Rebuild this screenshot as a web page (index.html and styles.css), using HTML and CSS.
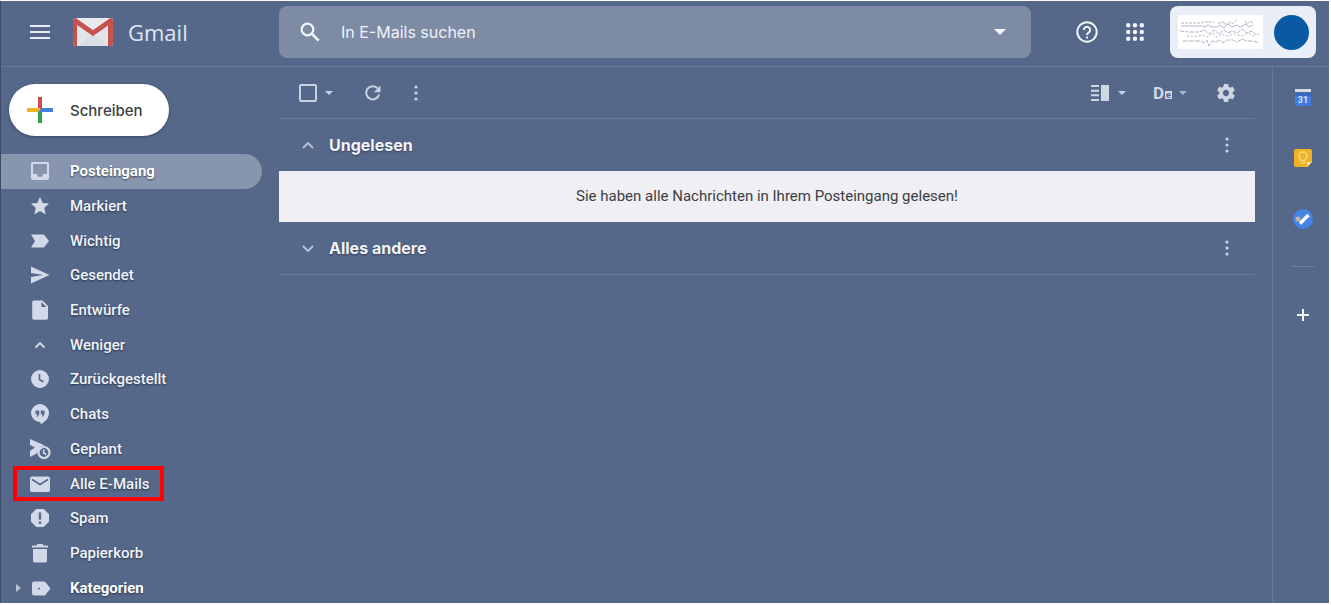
FILE: index.html
```
<!DOCTYPE html>
<html lang="de">
<head>
<meta charset="utf-8">
<title>Gmail</title>
<link rel="stylesheet" href="styles.css">
</head>
<body>
<div class="app">
  <header class="topbar">
    <div class="brand">
      <button class="icon-btn menu" type="button" aria-label="Hauptmenü">
        <svg width="20" height="14" viewBox="0 0 20 14"><path d="M0 1h20M0 7h20M0 13h20" stroke="#e8ecf5" stroke-width="2"/></svg>
      </button>
      <svg class="logo" width="40" height="30" viewBox="0 0 40 30">
        <path d="M3 1h34a3 3 0 0 1 3 3v22a3 3 0 0 1-3 3H3a3 3 0 0 1-3-3V4a3 3 0 0 1 3-3z" fill="#e3e4e8"/>
        <path d="M5 29l15-12 15 12z" fill="#d9dde4"/>
        <path d="M0 4a3 3 0 0 1 3-3l17 12L37 1a3 3 0 0 1 3 3v22a3 3 0 0 1-3 3h-2V8.500L20 19 4 8v21H3a3 3 0 0 1-3-3z" fill="#c5524d"/>
        <path d="M3 1h34L20 13z" fill="#e9eaee"/>
      </svg>
      <span class="brand-name">Gmail</span>
    </div>
    <form class="search" role="search">
      <button class="icon-btn" type="button" aria-label="Suchen">
        <svg width="20" height="20" viewBox="0 0 20 20" fill="none" stroke="#f1f4fa"><circle cx="7.500" cy="7.500" r="5.800" stroke-width="2.200"/><path d="M11.700 11.700l7 7" stroke-width="2.600"/></svg>
      </button>
      <input class="search-input" type="text" placeholder="In E-Mails suchen" aria-label="In E-Mails suchen">
      <button class="icon-btn" type="button" aria-label="Suchoptionen">
        <svg width="12" height="6" viewBox="0 0 12 6"><path d="M0 0h12L6 6z" fill="#f1f4fa"/></svg>
      </button>
    </form>
    <div class="account-tools">
      <button class="icon-btn" type="button" aria-label="Support">
        <svg width="22" height="22" viewBox="0 0 22 22" fill="none" stroke="#f1f4fa" stroke-width="2"><circle cx="11" cy="11" r="9.700"/><path d="M7.900 9a3.100 3.100 0 1 1 5 2.300C11.700 12.200 11 12.700 11 14"/><path d="M11 15.500v2"/></svg>
      </button>
      <button class="icon-btn" type="button" aria-label="Google Apps">
        <svg width="18" height="18" viewBox="0 0 18 18" fill="#f1f4fa"><circle cx="2.200" cy="2.200" r="2.200"/><circle cx="9" cy="2.200" r="2.200"/><circle cx="15.800" cy="2.200" r="2.200"/><circle cx="2.200" cy="9" r="2.200"/><circle cx="9" cy="9" r="2.200"/><circle cx="15.800" cy="9" r="2.200"/><circle cx="2.200" cy="15.800" r="2.200"/><circle cx="9" cy="15.800" r="2.200"/><circle cx="15.800" cy="15.800" r="2.200"/></svg>
      </button>
      <button class="account" type="button" aria-label="Konto">
        <svg class="scribble" width="85" height="34" viewBox="0 0 85 34" fill="none" stroke="#b3b6c8" stroke-width="1"><path d="M3 8h20l4-1h9M40 7l2 2 3-3 2 4 4-3 3 2 5-4M67 6l2 3 4-3 2 3" stroke-dasharray="3 1"/><path d="M3 11h22l2 1 3-2 3 2h6l3-2 4 3 4-4 4 3 5-2 3 2 6-3 3 3 4-2"/><path d="M2 16l9 1h10l5-2 5 4 5-4 5 4 5-4 4 3 5-2 4 2 5-4 5 4 5-2 4 4 3-1" stroke-dasharray="4 1"/><path d="M9 21l8 1 7-2 6 2 4-4 5 4 5-3 5 2 7-2 8 2 6-3 7 4" stroke-dasharray="2 2"/><path d="M5 26h18l3 2 3-3 2 6 3-5 4 1 4-2 3 3 4-3h6l4 2 5-3 5 2h7l5 2" stroke-dasharray="5 1"/></svg>
        <span class="avatar"></span>
      </button>
    </div>
  </header>

  <div class="body">
    <aside class="sidebar">
      <button class="compose" type="button">
        <svg width="26" height="26" viewBox="0 0 26 26"><path d="M11 0h4v13h-4z" fill="#cf4d45"/><path d="M0 11h13v4H0z" fill="#efb41f"/><path d="M11 15l4-2v13h-4z" fill="#349b52"/><path d="M15 11h11v4H11z" fill="#4380e0"/></svg>
        Schreiben
      </button>
      <nav class="nav">
        <a class="item active" href="#"><svg class="ico" viewBox="0 0 20 20"><path fill-rule="evenodd" d="M3 1h14a2 2 0 0 1 2 2v14a2 2 0 0 1-2 2H3a2 2 0 0 1-2-2V3a2 2 0 0 1 2-2zm0 2v10h4a3 3 0 0 0 6 0h4V3z"/></svg>Posteingang</a>
        <a class="item" href="#"><svg class="ico" viewBox="0 0 20 20"><path d="M10 1l2.700 6 6.300.6-4.800 4.300L15.700 18.500 10 15l-5.700 3.500 1.500-6.600L1 7.600 7.300 7z"/></svg>Markiert</a>
        <a class="item" href="#"><svg class="ico" viewBox="0 0 20 20"><path d="M1 3.500h12a2 2 0 0 1 1.700.9L19 10l-4.300 5.600a2 2 0 0 1-1.700.9H1L5 10z"/></svg>Wichtig</a>
        <a class="item" href="#"><svg class="ico" viewBox="0 0 20 20"><path d="M1 1.500L19.500 10 1 18.500V12l12-2L1 8z"/></svg>Gesendet</a>
        <a class="item" href="#"><svg class="ico" viewBox="0 0 20 20"><path fill-rule="evenodd" d="M4 .5h8.500L18 6v12a1.800 1.800 0 0 1-1.800 1.800H4A1.800 1.800 0 0 1 2.200 18V2.300A1.800 1.800 0 0 1 4 .5zM11.500 2v5h5z"/></svg>Entwürfe</a>
        <a class="item" href="#"><svg class="ico" viewBox="0 0 20 20"><path d="M5.500 12.500L10 8l4.500 4.500" fill="none" stroke="#d2d9e8" stroke-width="1.800"/></svg>Weniger</a>
        <a class="item" href="#"><svg class="ico" viewBox="0 0 20 20"><circle cx="10" cy="10" r="9"/><path class="cut" d="M9.500 5v5.500l4 2.500"/></svg>Zurückgestellt</a>
        <a class="item" href="#"><svg class="ico" viewBox="0 0 20 20"><path fill-rule="evenodd" d="M10 0a9 9 0 0 1 9 9c0 5-4 9-8.500 11.500V18H10A9 9 0 0 1 10 0zM5.500 6.500v3.800h2L6.500 12.500H8l1.200-2.400V6.500zm5.300 0v3.800h2L11.800 12.500h1.500l1.200-2.400V6.500z"/></svg>Chats</a>
        <a class="item" href="#"><svg class="ico" viewBox="0 0 20 20"><path d="M0 0l8 3.500 7 3C11 6.500 8 9.500 7.500 14L0 18v-6l5-3.500L0 6z"/><circle cx="14" cy="13.500" r="5.500" fill="none" stroke="#d2d9e8" stroke-width="2.200"/><path d="M13.700 10.500V14l2.500 1.500" fill="none" stroke="#d2d9e8" stroke-width="1.600"/></svg>Geplant</a>
        <a class="item" href="#"><svg class="ico" viewBox="0 0 20 20"><rect x="0" y="2.500" width="20" height="15.500" rx="2"/><path class="cut" d="M2 5.500l8 5 8-5"/></svg>Alle E-Mails<span class="marker"></span></a>
        <a class="item" href="#"><svg class="ico" viewBox="0 0 20 20"><path d="M6.300 1h7.400L19 6.300v7.400L13.700 19H6.300L1 13.700V6.300z"/><path class="cut thick" d="M10 4.500v7M10 13.500v2.500"/></svg>Spam</a>
        <a class="item" href="#"><svg class="ico" viewBox="0 0 20 20"><path d="M2 2.500h4.500l1-1.500h5l1 1.500H18v2H2zM3 6h14v11.500a2 2 0 0 1-2 2H5a2 2 0 0 1-2-2z"/></svg>Papierkorb</a>
        <a class="item bold" href="#"><svg class="caret" width="5" height="8" viewBox="0 0 5 8"><path d="M0 0l5 4-5 4z" fill="#b9c3d8"/></svg><svg class="ico" viewBox="0 0 20 20"><path d="M4 3.500h10a2 2 0 0 1 1.700.9L20.500 10.500l-4.800 6a2 2 0 0 1-1.700.9H4a2 2 0 0 1-2-2v-10a2 2 0 0 1 2-1.900z"/><circle cx="9" cy="10.500" r="1" fill="#556889"/></svg>Kategorien</a>
      </nav>
    </aside>

    <main class="main">
      <div class="toolbar">
        <div class="tools">
          <label class="select-all"><input type="checkbox" aria-label="Auswählen"></label>
          <button class="icon-btn drop" type="button" aria-label="Auswahl"><svg width="8" height="4" viewBox="0 0 8 4"><path d="M0 0h8L4 4z" fill="#c9d2e4"/></svg></button>
          <button class="icon-btn reload" type="button" aria-label="Aktualisieren"><svg width="16" height="16" viewBox="0 0 16 16"><path d="M14.200 9.500A6.600 6.600 0 1 1 12.800 3.400" fill="none" stroke="#c9d2e4" stroke-width="2"/><path d="M15.500.5v6.700H8.800z" fill="#c9d2e4"/></svg></button>
          <button class="icon-btn" type="button" aria-label="Mehr"><svg width="4" height="16" viewBox="0 0 4 16" fill="#c9d2e4"><circle cx="2" cy="2" r="1.600"/><circle cx="2" cy="8" r="1.600"/><circle cx="2" cy="14" r="1.600"/></svg></button>
        </div>
        <div class="tools">
          <button class="icon-btn split" type="button" aria-label="Geteilte Ansicht"><svg width="18" height="16" viewBox="0 0 18 16" fill="#cfd7e6"><path d="M0 0h8v2H0zM0 4.700h8v2H0zM0 9.300h8v2H0zM0 14h8v2H0zM10 0h8v16h-8z"/></svg><svg width="8" height="4" viewBox="0 0 8 4"><path d="M0 0h8L4 4z" fill="#c9d2e4"/></svg></button>
          <button class="icon-btn lang" type="button" aria-label="Eingabetool"><span class="lang-d">D</span><span class="lang-e">e</span><svg width="8" height="4" viewBox="0 0 8 4"><path d="M0 0h8L4 4z" fill="#a9b6cd"/></svg></button>
          <button class="icon-btn" type="button" aria-label="Einstellungen"><svg width="18" height="18" viewBox="2 2 20 20" fill="#cfd7e6"><path d="M19.430 12.980c.04-.32.07-.64.07-.98s-.03-.66-.07-.98l2.110-1.650c.19-.15.24-.42.12-.64l-2-3.460c-.12-.22-.39-.3-.61-.22l-2.490 1c-.52-.4-1.080-.73-1.690-.98l-.38-2.650C14.460 2.180 14.250 2 14 2h-4c-.25 0-.46.18-.49.42l-.38 2.650c-.61.25-1.170.59-1.690.98l-2.490-1c-.23-.09-.49 0-.61.22l-2 3.460c-.13.22-.07.49.12.64l2.110 1.650c-.04.32-.07.65-.07.98s.03.66.07.98l-2.110 1.650c-.19.15-.24.42-.12.64l2 3.460c.12.22.39.3.61.22l2.490-1c.52.4 1.080.73 1.690.98l.38 2.650c.03.24.24.42.49.42h4c.25 0 .46-.18.49-.42l.38-2.650c.61-.25 1.170-.59 1.690-.98l2.490 1c.23.09.49 0 .61-.22l2-3.460c.12-.22.07-.49-.12-.64l-2.110-1.650zM12 15.500c-1.930 0-3.500-1.570-3.500-3.500s1.570-3.500 3.500-3.500 3.500 1.570 3.500 3.500-1.570 3.500-3.500 3.500z"/></svg></button>
        </div>
      </div>
      <section>
        <div class="section-head">
          <svg width="12" height="7" viewBox="0 0 12 7"><path d="M1 6l5-5 5 5" fill="none" stroke="#b9c3d8" stroke-width="1.800"/></svg>
          <h2 class="title">Ungelesen</h2>
          <button class="icon-btn" type="button" aria-label="Optionen für Ungelesen"><svg width="4" height="16" viewBox="0 0 4 16" fill="#c9d2e4"><circle cx="2" cy="2" r="1.600"/><circle cx="2" cy="8" r="1.600"/><circle cx="2" cy="14" r="1.600"/></svg></button>
        </div>
        <p class="notice">Sie haben alle Nachrichten in Ihrem Posteingang gelesen!</p>
      </section>
      <section>
        <div class="section-head ruled">
          <svg width="12" height="7" viewBox="0 0 12 7"><path d="M1 1l5 5 5-5" fill="none" stroke="#b9c3d8" stroke-width="1.800"/></svg>
          <h2 class="title">Alles andere</h2>
          <button class="icon-btn" type="button" aria-label="Optionen für Alles andere"><svg width="4" height="16" viewBox="0 0 4 16" fill="#c9d2e4"><circle cx="2" cy="2" r="1.600"/><circle cx="2" cy="8" r="1.600"/><circle cx="2" cy="14" r="1.600"/></svg></button>
        </div>
      </section>
    </main>

    <aside class="rail">
      <button class="icon-btn" type="button" aria-label="Kalender"><svg width="20" height="20" viewBox="0 0 20 20"><path d="M2 2h16v3H2z" fill="#d4dae6"/><path d="M2 6h16v13H2z" fill="#3f7be0"/><path d="M2 6h16v3H2z" fill="#3468c4"/><text class="day" x="10" y="16" text-anchor="middle">31</text></svg></button>
      <button class="icon-btn" type="button" aria-label="Notizen"><svg width="20" height="20" viewBox="0 0 20 20"><path d="M3 1h14a2 2 0 0 1 2 2v11l-5 5H3a2 2 0 0 1-2-2V3a2 2 0 0 1 2-2z" fill="#efb325"/><path d="M19 14l-5 5v-5z" fill="#fbe3a3"/><path d="M8 12.500c0-1-2-2-2-4.500a4 4 0 0 1 8 0c0 2.500-2 3.500-2 4.500zM8 15h4" fill="none" stroke="#f8d98b" stroke-width="1.400"/></svg></button>
      <button class="icon-btn" type="button" aria-label="Tasks"><svg width="20" height="20" viewBox="0 0 20 20"><circle cx="10" cy="10" r="10" fill="#4583e6"/><path d="M7 14.500l8.500-8.500" stroke="#fff" stroke-width="3.400"/><circle cx="5" cy="10" r="2.500" fill="#c1b79c"/></svg></button>
      <hr class="rule">
      <button class="icon-btn" type="button" aria-label="Add-ons abrufen"><svg width="14" height="14" viewBox="0 0 14 14"><path d="M7 1v12M1 7h12" stroke="#f4f6fb" stroke-width="2"/></svg></button>
    </aside>
  </div>
</div>
</body>
</html>
```
FILE: styles.css
```
* { box-sizing: border-box; }

body {
  margin: 0;
  height: 100vh;
  padding: 1px 2px 2px 0;
  background: #fff;
  font-family: Roboto, "Liberation Sans", sans-serif;
}

button, input { font: inherit; border: 0; background: none; padding: 0; }
svg { display: block; flex: none; }

.app {
  height: 100%;
  display: flex;
  flex-direction: column;
  overflow: hidden;
  background: #556889;
  border-left: 1px solid #3d4b66;
}

.icon-btn { display: flex; align-items: center; justify-content: center; }

.topbar {
  flex: none;
  display: flex;
  height: 66px;
  padding: 5px 13px 8px 0;
  border-bottom: 1px solid #687a9b;
}

.brand { display: flex; align-items: center; width: 278px; padding-left: 29px; }
.menu { margin-right: 23px; }
.brand-name {
  margin-left: 15px;
  font-family: "Open Sans", sans-serif;
  font-size: 22px;
  color: #dfe6f3;
}

.search {
  flex: 1;
  max-width: 752px;
  display: flex;
  align-items: center;
  padding: 0 25px 0 21px;
  border-radius: 8px;
  background: #7d8ba5;
}
.search-input {
  flex: 1;
  min-width: 0;
  margin-left: 21px;
  font-family: Inter, sans-serif;
  font-size: 16px;
  color: #eef2f9;
  outline: 0;
}
.search-input::placeholder { color: #eef2f9; opacity: 1; }

.account-tools { display: flex; align-items: center; margin-left: auto; }
.account-tools .icon-btn { margin-right: 28px; }
.account-tools .icon-btn + .icon-btn { margin-right: 26px; }
.account {
  align-self: stretch;
  display: flex;
  align-items: center;
  gap: 11px;
  padding: 0 7px 0 8px;
  border-radius: 8px;
  background: #eaeef6;
}
.scribble { background: #fff; }
.avatar { width: 35px; height: 35px; border-radius: 50%; background: #0a5aa3; }

.body { flex: 1; min-height: 0; display: flex; }

.sidebar { width: 278px; flex: none; padding: 17px 17px 0 0; }
.compose {
  display: flex;
  align-items: center;
  gap: 17px;
  height: 52px;
  margin: 0 0 18px 8px;
  padding: 0 26px 0 18px;
  border-radius: 26px;
  background: #fff;
  box-shadow: 0 1px 3px rgba(30, 40, 60, .5);
  font-family: Inter, sans-serif;
  font-size: 15px;
  font-weight: 500;
  color: #3c4043;
}

.nav { display: grid; grid-auto-rows: 1fr; min-height: 451px; }
.item {
  position: relative;
  display: flex;
  align-items: center;
  gap: 20px;
  padding-left: 29px;
  border-radius: 0 18px 18px 0;
  font-size: 15px;
  font-weight: 500;
  color: #f1f4fa;
  text-decoration: none;
  text-shadow: 0 1px 2px rgba(20, 30, 50, .7);
}
.ico { width: 20px; height: 20px; fill: #d2d9e8; overflow: visible; }
.cut { fill: none; stroke: #556889; stroke-width: 1.6px; }
.thick { stroke-width: 2.4px; }
.active { background: #8895ae; font-weight: 700; color: #fff; }
.bold { font-weight: 700; color: #fff; }
.caret { position: absolute; left: 15px; }
.marker {
  position: absolute;
  left: 12px;
  top: 0;
  bottom: 0;
  width: 151px;
  border: 4px solid #f00;
}

.main { flex: 1; min-width: 0; padding-right: 17px; }
.toolbar {
  display: flex;
  justify-content: space-between;
  height: 52px;
  padding: 0 20px;
  border-bottom: 1px solid #677a9b;
}
.tools { display: flex; align-items: center; }
.select-all { display: flex; }
.select-all input {
  appearance: none;
  width: 18px;
  height: 18px;
  margin: 0;
  border: 2px solid #c9d2e4;
  border-radius: 2px;
}
.drop { margin: 0 32px 0 8px; }
.reload { margin-right: 33px; }
.split { gap: 9px; margin-right: 27px; }
.lang { margin-right: 30px; }
.lang-d { font-size: 17px; font-weight: 700; line-height: 20px; color: #cfd7e6; }
.lang-e {
  width: 7px;
  margin: 5px 7px 0 1px;
  background: #cfd7e6;
  color: #556889;
  font-size: 9px;
  font-weight: 700;
  line-height: 8px;
}

.section-head {
  display: flex;
  align-items: center;
  height: 52px;
  padding: 0 26px 0 23px;
}
.ruled { height: 53px; border-bottom: 1px solid #677a9b; }
.title {
  flex: 1;
  margin: 0 0 0 15px;
  font-family: Inter, sans-serif;
  font-size: 16px;
  font-weight: 700;
  color: #f1f4fa;
  text-shadow: 0 1px 2px rgba(20, 30, 50, .5);
}
.notice {
  margin: 0;
  background: #efeff4;
  font-size: 15px;
  line-height: 51px;
  text-align: center;
  color: #3c4043;
}

.rail {
  flex: none;
  width: 57px;
  display: flex;
  flex-direction: column;
  align-items: center;
  gap: 41px;
  padding: 20px 0 0 4px;
  border-left: 1px solid #62769a;
}
.day { font: 700 9px Roboto, sans-serif; fill: #d7e3fa; }
.rule { width: 22px; height: 1px; margin: -4px 0 0; border: 0; background: #6f81a0; }
```
